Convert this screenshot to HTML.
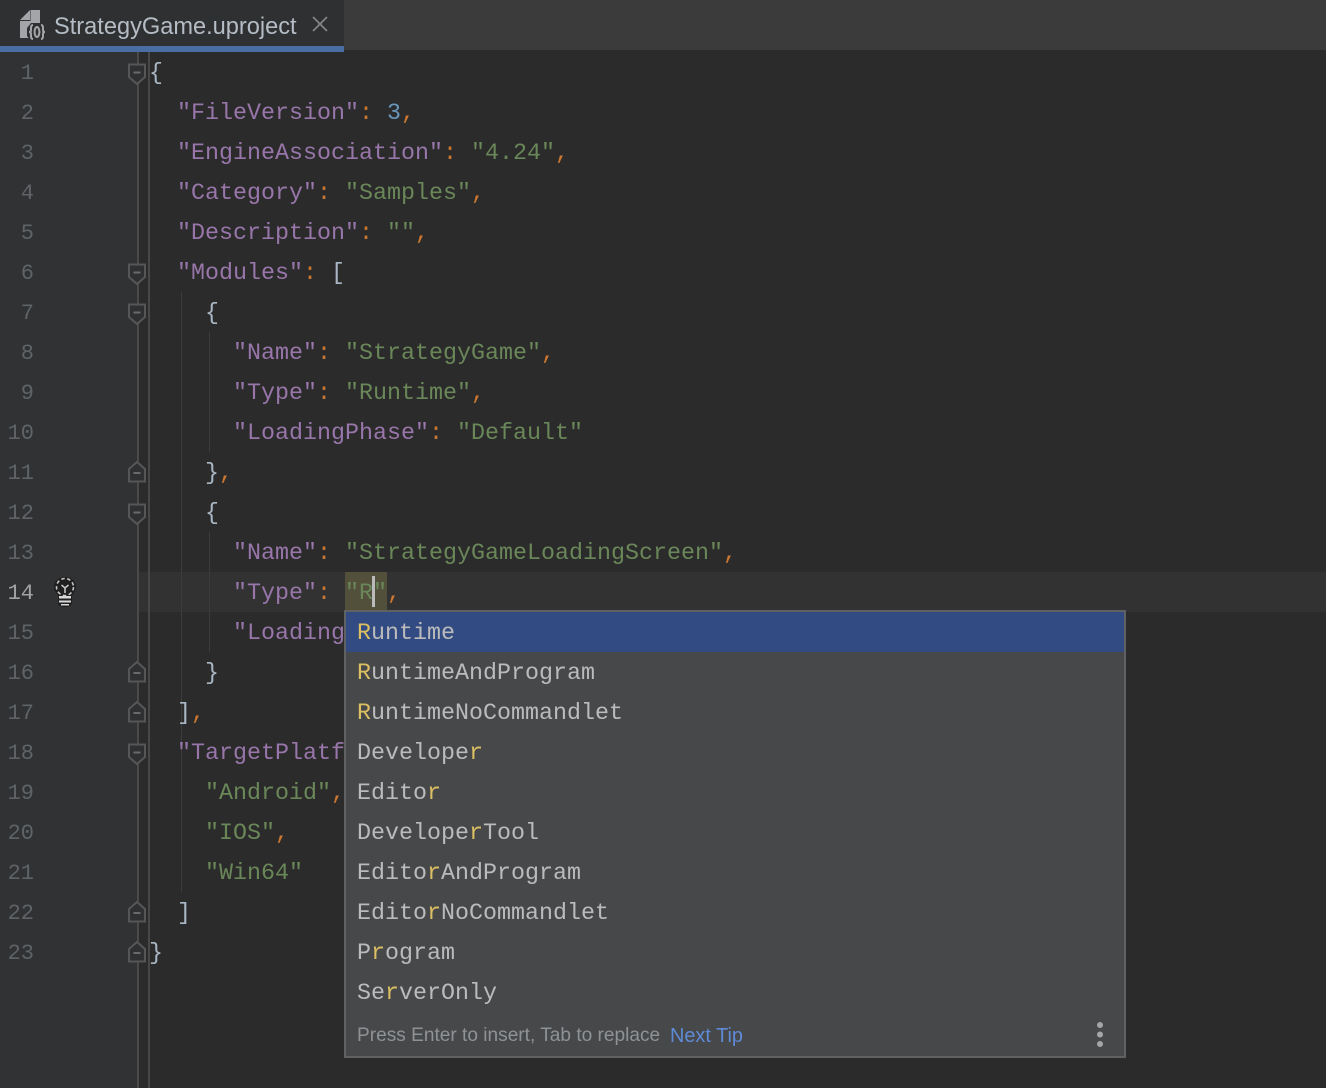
<!DOCTYPE html>
<html><head><meta charset="utf-8"><style>
html,body{margin:0;padding:0;background:#2b2b2b}
#r{position:relative;width:1326px;height:1088px;overflow:hidden;background:#2b2b2b;font-family:"Liberation Mono",monospace;font-size:23.33px}
.a{position:absolute}
.l{position:absolute;left:149px;height:40px;line-height:40px;white-space:pre;color:#a9b7c6;margin-top:2px}
.n{position:absolute;right:1292px;height:40px;line-height:40px;color:#606366;font-size:22px;white-space:pre;margin-top:2px}
.k{color:#9876aa}.s{color:#6a8759}.c{color:#cc7832}.d{color:#6897bb}
.p{position:absolute;left:357px;height:40px;line-height:40px;white-space:pre;color:#bbbbbb;margin-top:2px}
.p b{font-weight:normal;color:#dcbf62}
</style></head><body><div id="r">
<div class="a" style="left:0;top:0;width:1326px;height:50px;background:#3b3b3b"></div>
<div class="a" style="left:0;top:0;width:344px;height:46px;background:#2f3031"></div>
<div class="a" style="left:0;top:46px;width:344px;height:6px;background:#4a6da3"></div>
<div class="a" style="left:0;top:52px;width:137px;height:1036px;background:#303234"></div>
<div class="a" style="left:137px;top:572px;width:1189px;height:40px;background:#323232"></div>
<div class="a" style="left:137px;top:52px;width:2px;height:1036px;background:#4a4a4a"></div>
<div class="a" style="left:148px;top:52px;width:2px;height:1036px;background:#484848"></div>
<div class="a" style="left:181px;top:292px;width:1px;height:600px;background:#3c3c3c"></div>
<div class="a" style="left:209px;top:332px;width:1px;height:120px;background:#3c3c3c"></div>
<div class="a" style="left:209px;top:532px;width:1px;height:120px;background:#3c3c3c"></div>
<div class="a" style="left:181px;top:772px;width:1px;height:120px;background:#3c3c3c"></div>

<svg class="a" style="left:18px;top:8px" width="30" height="34" viewBox="0 0 30 34">
<path d="M2 12 L12 2 V12 Z M12.500 2 H22 V14 H12.500 Z M2 13 H22 V30 H2 Z" fill="#a3a5a8"/>
<path d="M13 15 H25 L29 20 V28 L25 33 H13 L9 28 V20 Z" fill="#2f3031"/>
<g fill="none" stroke="#a3a5a8" stroke-width="2"><path d="M15 17 Q13 17 13 20 V22 Q13 24 11 24 Q13 24 13 26 V28 Q13 31 15 31"/><path d="M23 17 Q25 17 25 20 V22 Q25 24 27 24 Q25 24 25 26 V28 Q25 31 23 31"/><ellipse cx="19" cy="24" rx="2.400" ry="5"/></g></svg>
<div class="a" style="left:54px;top:9px;height:36px;line-height:36px;font-family:'Liberation Sans',sans-serif;font-size:23.6px;color:#b4bcc5;white-space:pre">StrategyGame.uproject</div>
<svg class="a" style="left:311px;top:15px" width="18" height="18"><path d="M2 2 L16 16 M16 2 L2 16" stroke="#85888b" stroke-width="1.6"/></svg>

<div class="n" style="top:52px">1</div><div class="n" style="top:92px">2</div><div class="n" style="top:132px">3</div><div class="n" style="top:172px">4</div><div class="n" style="top:212px">5</div><div class="n" style="top:252px">6</div><div class="n" style="top:292px">7</div><div class="n" style="top:332px">8</div><div class="n" style="top:372px">9</div><div class="n" style="top:412px">10</div><div class="n" style="top:452px">11</div><div class="n" style="top:492px">12</div><div class="n" style="top:532px">13</div><div class="n" style="top:572px;color:#a4a3a3">14</div><div class="n" style="top:612px">15</div><div class="n" style="top:652px">16</div><div class="n" style="top:692px">17</div><div class="n" style="top:732px">18</div><div class="n" style="top:772px">19</div><div class="n" style="top:812px">20</div><div class="n" style="top:852px">21</div><div class="n" style="top:892px">22</div><div class="n" style="top:932px">23</div>

<svg class="a" style="left:128px;top:52px" width="20" height="920" viewBox="0 0 20 920" fill="#2e3032" stroke="#565656" stroke-width="2">
<g><path d="M1 12.500 H17 V25 L9 32 L1 25 Z"/><path d="M5.500 20.500 H12.500" stroke="#6a6a6a"/></g>
<g transform="translate(0,200)"><path d="M1 12.500 H17 V25 L9 32 L1 25 Z"/><path d="M5.500 20.500 H12.500" stroke="#6a6a6a"/></g>
<g transform="translate(0,240)"><path d="M1 12.500 H17 V25 L9 32 L1 25 Z"/><path d="M5.500 20.500 H12.500" stroke="#6a6a6a"/></g>
<g transform="translate(0,440)"><path d="M1 12.500 H17 V25 L9 32 L1 25 Z"/><path d="M5.500 20.500 H12.500" stroke="#6a6a6a"/></g>
<g transform="translate(0,680)"><path d="M1 12.500 H17 V25 L9 32 L1 25 Z"/><path d="M5.500 20.500 H12.500" stroke="#6a6a6a"/></g>
<g transform="translate(0,400)"><path d="M1 29.500 H17 V17 L9 10 L1 17 Z"/><path d="M5.500 21 H12.500" stroke="#6a6a6a"/></g>
<g transform="translate(0,600)"><path d="M1 29.500 H17 V17 L9 10 L1 17 Z"/><path d="M5.500 21 H12.500" stroke="#6a6a6a"/></g>
<g transform="translate(0,640)"><path d="M1 29.500 H17 V17 L9 10 L1 17 Z"/><path d="M5.500 21 H12.500" stroke="#6a6a6a"/></g>
<g transform="translate(0,840)"><path d="M1 29.500 H17 V17 L9 10 L1 17 Z"/><path d="M5.500 21 H12.500" stroke="#6a6a6a"/></g>
<g transform="translate(0,880)"><path d="M1 29.500 H17 V17 L9 10 L1 17 Z"/><path d="M5.500 21 H12.500" stroke="#6a6a6a"/></g>
</svg>

<svg class="a" style="left:53px;top:576px" width="24" height="32" viewBox="0 0 24 32">
<path d="M12 1 C5 1 1 6 1 11 C1 15 4 17 5 20 V28 Q7 31 12 31 Q17 31 19 28 V20 C20 17 23 15 23 11 C23 6 19 1 12 1 Z" fill="#1f1f1f"/>
<circle cx="12" cy="11" r="8.500" fill="none" stroke="#c4c4c4" stroke-width="1.600" stroke-dasharray="3.500 2.500"/>
<path d="M8.500 9 L12 12 L15.500 9 M12 12 V17" fill="none" stroke="#c4c4c4" stroke-width="1.600"/>
<path d="M6 20 H18 V22.500 H6 Z M6 24.500 H18 V26.500 H6 Z M8 28 H16 V29.500 H8 Z" fill="#d8d8d8"/></svg>

<div class="a" style="left:345px;top:572px;width:42px;height:40px;background:#52503a"></div>

<div class="l" style="top:52px">{</div>
<div class="l" style="top:92px">  <span class="k">"FileVersion"</span><span class="c">:</span> <span class="d">3</span><span class="c">,</span></div>
<div class="l" style="top:132px">  <span class="k">"EngineAssociation"</span><span class="c">:</span> <span class="s">"4.24"</span><span class="c">,</span></div>
<div class="l" style="top:172px">  <span class="k">"Category"</span><span class="c">:</span> <span class="s">"Samples"</span><span class="c">,</span></div>
<div class="l" style="top:212px">  <span class="k">"Description"</span><span class="c">:</span> <span class="s">""</span><span class="c">,</span></div>
<div class="l" style="top:252px">  <span class="k">"Modules"</span><span class="c">:</span> [</div>
<div class="l" style="top:292px">    {</div>
<div class="l" style="top:332px">      <span class="k">"Name"</span><span class="c">:</span> <span class="s">"StrategyGame"</span><span class="c">,</span></div>
<div class="l" style="top:372px">      <span class="k">"Type"</span><span class="c">:</span> <span class="s">"Runtime"</span><span class="c">,</span></div>
<div class="l" style="top:412px">      <span class="k">"LoadingPhase"</span><span class="c">:</span> <span class="s">"Default"</span></div>
<div class="l" style="top:452px">    }<span class="c">,</span></div>
<div class="l" style="top:492px">    {</div>
<div class="l" style="top:532px">      <span class="k">"Name"</span><span class="c">:</span> <span class="s">"StrategyGameLoadingScreen"</span><span class="c">,</span></div>
<div class="l" style="top:572px">      <span class="k">"Type"</span><span class="c">:</span> <span class="s">"R"</span><span class="c">,</span></div>
<div class="l" style="top:612px">      <span class="k">"Loading</span></div>
<div class="l" style="top:652px">    }</div>
<div class="l" style="top:692px">  ]<span class="c">,</span></div>
<div class="l" style="top:732px">  <span class="k">"TargetPlatf</span></div>
<div class="l" style="top:772px">    <span class="s">"Android"</span><span class="c">,</span></div>
<div class="l" style="top:812px">    <span class="s">"IOS"</span><span class="c">,</span></div>
<div class="l" style="top:852px">    <span class="s">"Win64"</span></div>
<div class="l" style="top:892px">  ]</div>
<div class="l" style="top:932px">}</div>
<div class="a" style="left:372px;top:576px;width:3px;height:31px;background:#bbbbbb"></div>

<div class="a" style="left:344px;top:610px;width:778px;height:444px;background:#46484a;border:2px solid #606163"></div>
<div class="a" style="left:346px;top:612px;width:778px;height:40px;background:#324c83"></div>
<div class="p" style="top:612px"><b>R</b>untime</div>
<div class="p" style="top:652px"><b>R</b>untimeAndProgram</div>
<div class="p" style="top:692px"><b>R</b>untimeNoCommandlet</div>
<div class="p" style="top:732px">Develope<b>r</b></div>
<div class="p" style="top:772px">Edito<b>r</b></div>
<div class="p" style="top:812px">Develope<b>r</b>Tool</div>
<div class="p" style="top:852px">Edito<b>r</b>AndProgram</div>
<div class="p" style="top:892px">Edito<b>r</b>NoCommandlet</div>
<div class="p" style="top:932px">P<b>r</b>ogram</div>
<div class="p" style="top:972px">Se<b>r</b>verOnly</div>
<div class="a" style="left:357px;top:1020px;height:32px;line-height:32px;font-family:'Liberation Sans',sans-serif;font-size:19.1px;color:#8f9295;white-space:pre">Press Enter to insert, Tab to replace</div>
<div class="a" style="left:670px;top:1020px;height:32px;line-height:32px;font-family:'Liberation Sans',sans-serif;font-size:19.9px;color:#5f8ad6;white-space:pre">Next Tip</div>
<svg class="a" style="left:1094px;top:1020px" width="12" height="28"><circle cx="6" cy="5" r="3" fill="#a5a6a8"/><circle cx="6" cy="14.500" r="3" fill="#a5a6a8"/><circle cx="6" cy="24" r="3" fill="#a5a6a8"/></svg>
</div></body></html>
